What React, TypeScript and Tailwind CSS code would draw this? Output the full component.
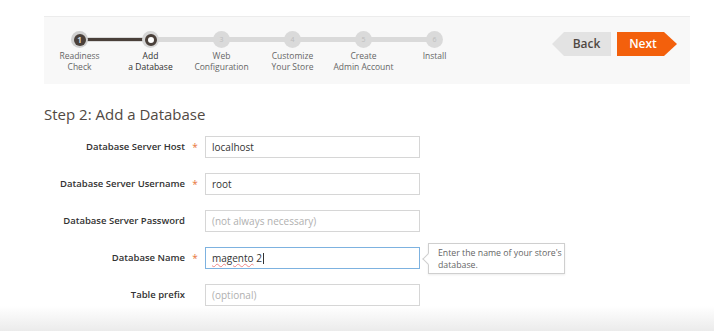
const steps = [
  { n: 1, label: ['Readiness', 'Check'], state: 'done' },
  { n: 2, label: ['Add', 'a Database'], state: 'current' },
  { n: 3, label: ['Web', 'Configuration'], state: 'todo' },
  { n: 4, label: ['Customize', 'Your Store'], state: 'todo' },
  { n: 5, label: ['Create', 'Admin Account'], state: 'todo' },
  { n: 6, label: ['Install'], state: 'todo' },
];

const fields = [
  { label: 'Database Server Host', required: true, value: 'localhost' },
  { label: 'Database Server Username', required: true, value: 'root' },
  { label: 'Database Server Password', required: false, placeholder: '(not always necessary)' },
  { label: 'Database Name', required: true, value: 'magento 2', focused: true },
  { label: 'Table prefix', required: false, placeholder: '(optional)' },
];

function Dot({ n, state }: { n: number; state: string }) {
  if (state === 'done') {
    return (
      <div className="w-[17px] h-[17px] rounded-full bg-[#cfcfcf] flex items-center justify-center">
        <div className="w-[12px] h-[12px] rounded-full bg-[#4a403a] text-[8px] leading-none font-bold text-[#d8d8d8] flex items-center justify-center">
          {n}
        </div>
      </div>
    );
  }
  if (state === 'current') {
    return (
      <div className="w-[17px] h-[17px] rounded-full bg-[#d6d6d6] flex items-center justify-center">
        <div className="w-[12px] h-[12px] rounded-full bg-white border-[3px] border-[#4a403a]" />
      </div>
    );
  }
  return (
    <div className="w-[17px] h-[17px] rounded-full bg-[#dadada] flex items-center justify-center text-[7px] leading-none text-[#bdbdbd]">
      {n}
    </div>
  );
}

export default function App() {
  return (
    <div
      className="w-[714px] h-[331px] bg-white flex flex-col overflow-hidden"
      style={{ fontFamily: '"Open Sans", "Liberation Sans", sans-serif' }}
    >
      {/* Progress bar */}
      <div className="mt-[16px] ml-[44px] w-[646px] h-[68px] bg-[#f8f8f8] border-t border-[#ececec] flex justify-between shrink-0">
        <div className="relative flex pt-[14px]">
          <div className="absolute top-[20px] left-[35px] w-[355px] h-[5px] bg-[#dadada]" />
          <div className="absolute top-[21px] left-[35px] w-[72px] h-[3px] bg-[#4a403a]" />
          {steps.map((s) => (
            <div key={s.n} className="relative w-[71px] flex flex-col items-center">
              <Dot n={s.n} state={s.state} />
              <div
                className={
                  'mt-[3px] text-[8.5px] leading-[10.5px] text-center ' +
                  (s.state === 'current' ? 'text-[#303030]' : 'text-[#666]')
                }
              >
                {s.label.map((l) => (
                  <div key={l}>{l}</div>
                ))}
              </div>
            </div>
          ))}
        </div>
        <div className="flex items-start gap-[6px] pt-[15px] pr-[13px]">
          <button
            className="w-[59px] h-[24px] bg-[#e3e3e3] text-[#514943] text-[12px] font-semibold pl-[10px]"
            style={{ clipPath: 'polygon(12px 0, 100% 0, 100% 100%, 12px 100%, 0 50%)' }}
          >
            Back
          </button>
          <button
            className="w-[60px] h-[24px] bg-[#f3600c] text-white text-[12px] font-semibold pr-[8px]"
            style={{ clipPath: 'polygon(0 0, calc(100% - 13px) 0, 100% 50%, calc(100% - 13px) 100%, 0 100%)' }}
          >
            Next
          </button>
        </div>
      </div>

      <h1 className="mt-[20px] ml-[44px] text-[15px] leading-[20px] text-[#514943]">Step 2: Add a Database</h1>

      {/* Form */}
      <div className="mt-[12px] flex flex-col gap-[15px]">
        {fields.map((f) => (
          <div key={f.label} className="relative flex items-center h-[22px]">
            <div className="w-[185px] text-right text-[9.5px] font-semibold text-[#333]">{f.label}</div>
            <div className="w-[20px] text-center text-[10px] text-[#e8743b]">{f.required ? '*' : ''}</div>
            <div
              className={
                'w-[215px] h-[22px] border px-[6px] flex items-center text-[10px] ' +
                (f.focused ? 'border-[#7db2e0]' : 'border-[#d6d6d6]')
              }
            >
              {f.value ? (
                f.focused ? (
                  <span className="text-[#333]">
                    <span className="underline decoration-wavy decoration-[#e88] decoration-1">magento</span> 2
                    <span className="inline-block w-px h-[11px] bg-[#333] align-middle ml-px" />
                  </span>
                ) : (
                  <span className="text-[#333]">{f.value}</span>
                )
              ) : (
                <span className="text-[#b0b0b0]">{f.placeholder}</span>
              )}
            </div>
            {f.focused && (
              <div className="absolute left-[428px] top-[-4px] w-[137px] h-[31px] bg-white border border-[#cfcfcf] shadow-[0_1px_2px_rgba(0,0,0,0.08)] pl-[9px] pt-[3px] text-[8.75px] leading-[12px] text-[#666]">
                <div className="absolute left-[-5px] top-[11px] w-[8px] h-[8px] bg-white border-l border-b border-[#cfcfcf] rotate-45" />
                Enter the name of your store's
                <br />
                database.
              </div>
            )}
          </div>
        ))}
      </div>

      <div className="flex-1 bg-gradient-to-b from-white to-[#ebebeb]" />
    </div>
  );
}
